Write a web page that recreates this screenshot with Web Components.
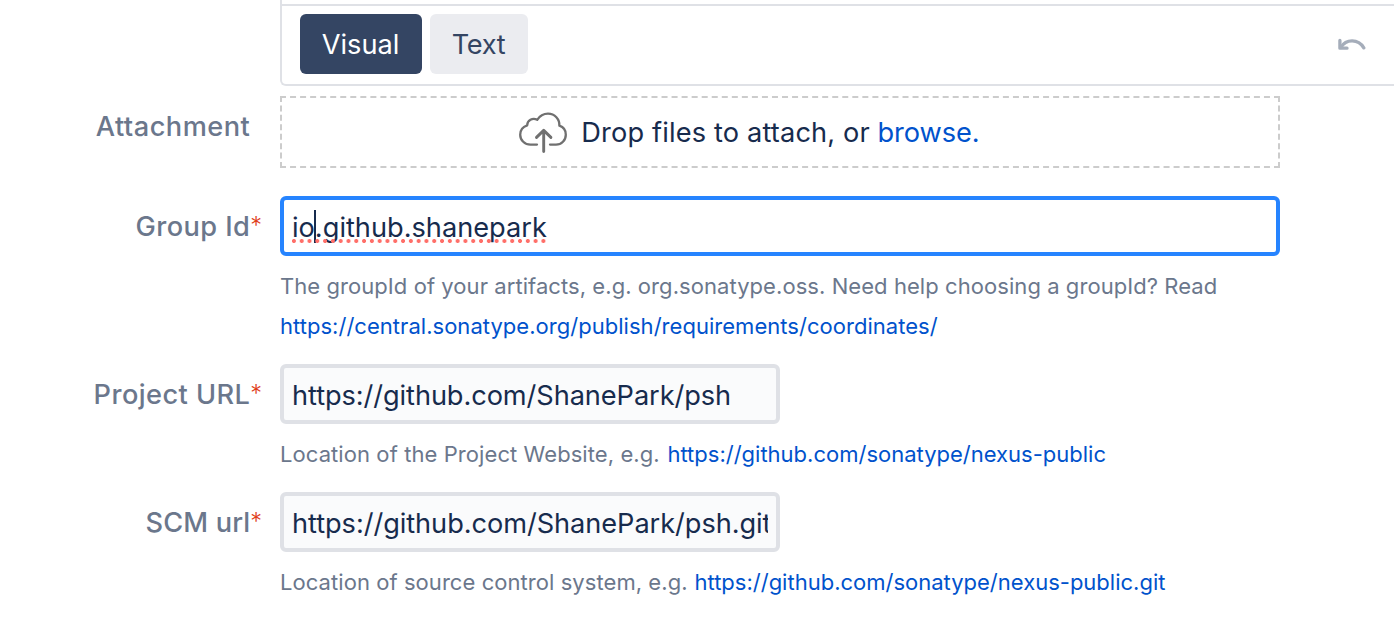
<!DOCTYPE html>
<html lang="en">
<head>
<meta charset="utf-8">
<title>Create issue</title>
<style>
body { margin: 0; background: #fff; color: #172b4d; font: 400 27.2px/40px Inter, "Liberation Sans", sans-serif; font-kerning: normal; width: 1394px; height: 620px; overflow: hidden; }
</style>
</head>
<body>
<issue-form>
  <editor-footer>
    <mode-button active>Visual</mode-button>
    <mode-button style="--track:-.4px">Text</mode-button>
  </editor-footer>
  <form-row label="Attachment" style="--row-gap:28px;--label-height:60px;--label-track:.48px">
    <drop-zone>Drop files to attach, or <text-link slot="action" style="--track:-.08px">browse.</text-link></drop-zone>
  </form-row>
  <form-row label="Group Id" required>
    <text-field focused>io.github.shanepark</text-field>
    <span slot="help" style="letter-spacing:.065px">The groupId of your artifacts, e.g. org.sonatype.oss. Need help choosing a groupId? Read</span>
    <br slot="help">
    <text-link slot="help" style="--track:.03px">https://central.sonatype.org/publish/requirements/coordinates/</text-link>
  </form-row>
  <form-row label="Project URL" required>
    <text-field style="--track:-.08px">https://github.com/ShanePark/psh</text-field>
    <span slot="help" style="letter-spacing:.08px;margin-right:1.5px">Location of the Project Website, e.g.</span>
    <text-link slot="help">https://github.com/sonatype/nexus-public</text-link>
  </form-row>
  <form-row label="SCM url" required style="--label-track:.15px">
    <text-field style="--track:-.06px">https://github.com/ShanePark/psh.git</text-field>
    <span slot="help" style="letter-spacing:.06px;margin-right:.7px">Location of source control system, e.g.</span>
    <text-link slot="help">https://github.com/sonatype/nexus-public.git</text-link>
  </form-row>
</issue-form>
<script>
function define(name, markup, setup) {
  const template = document.createElement('template');
  template.innerHTML = markup;
  customElements.define(name, class extends HTMLElement {
    constructor() {
      super();
      this.attachShadow({ mode: 'open' }).append(template.content.cloneNode(true));
    }
    connectedCallback() { if (setup) setup(this, this.shadowRoot); }
  });
}

define('issue-form', `
<style>
  :host { display: flex; flex-direction: column; }
</style><slot></slot>`);

define('editor-footer', `
<style>
  :host { display: block; margin: 0 0 10px 280px; height: 86px; box-sizing: border-box; padding-top: 4px;
    border: solid #dfe1e6; border-width: 0 0 2px 2px; border-bottom-left-radius: 6px; }
  .bar { display: flex; align-items: center; gap: 8px; height: 80px; box-sizing: border-box;
    border-top: 2px solid #dfe1e6; padding: 0 28px 2px 18px; }
  svg { margin-left: auto; margin-top: 1px; }
</style>
<div class="bar"><slot></slot>
  <svg width="28" height="14" viewBox="0 0 28 14" fill="none" stroke="#a5adba" stroke-width="3.3" stroke-linecap="round" stroke-linejoin="round">
    <path d="M1.9 2.4V10.2H9"/><path d="M2.8 9.4C8 1 20 .4 25.8 9.8"/>
  </svg>
</div>`);

define('mode-button', `
<style>
  :host { display: flex; align-items: center; justify-content: center; box-sizing: border-box; width: 98px; height: 60px;
    padding: 2px 1px 0 0; border-radius: 6px; background: #ebecf0; color: #344563; letter-spacing: var(--track); }
  :host([active]) { width: 122px; background: #344563; color: #fff; }
</style><slot></slot>`);

define('form-row', `
<style>
  :host { display: grid; grid-template-columns: 250.3px 1000px; column-gap: 29.7px; margin-bottom: var(--row-gap, 18px); }
  .label { display: flex; justify-content: flex-end; align-items: center; height: var(--label-height, 60px);
    box-sizing: border-box; padding-top: 2px;
    color: #6b778c; font-weight: 500; letter-spacing: var(--label-track, .43px); white-space: nowrap; }
  .mark { width: 0; font-size: 23.5px; font-weight: 300; color: #e0401a; line-height: 32px; margin-bottom: 2px; }
  .help { margin-top: 10px; font-size: 22px; line-height: 40px; color: #6b778c; white-space: nowrap; }
  .help.empty { display: none; }
</style>
<div class="label"><span class="text"></span></div>
<div><slot></slot><div class="help"><slot name="help"></slot></div></div>`, (host, root) => {
  root.querySelector('.text').textContent = host.getAttribute('label');
  if (host.hasAttribute('required')) {
    const mark = document.createElement('span');
    mark.className = 'mark';
    mark.textContent = '*';
    root.querySelector('.label').append(mark);
  }
  root.querySelector('.help').classList.toggle('empty', !host.querySelector('[slot=help]'));
});

define('text-link', `
<style>
  :host { display: inline; color: #0052cc; letter-spacing: var(--track, 0); cursor: pointer; }
</style><slot></slot>`);

define('drop-zone', `
<style>
  :host { display: flex; align-items: center; box-sizing: border-box; height: 72px;
    border: 2px dashed #ccc; padding: 2px 0 0 237px; white-space: nowrap; }
  svg { margin: 0 14.3px 0 0; }
  .text { letter-spacing: .15px; width: 296.2px; }
</style>
<svg width="48" height="42" viewBox="0 0 48 42" fill="none" stroke="#707070" stroke-width="2.3" stroke-linecap="round" stroke-linejoin="round">
  <path d="M18 32.6H11.5C5.8 32.6 1.2 28.3 1.2 22.7C1.2 18.3 4 14.7 8.2 13.3C8.2 8.4 13.5 5.4 18.2 7.8C20.8 3.8 24.6 1.7 29 1.7C35.8 1.7 40.7 7 40.4 13.7C44.4 15 46.8 18.5 46.8 22.7C46.8 28.3 42.5 32.6 37 32.6H31"/>
  <path stroke-width="2.9" d="M24.7 39.5V18.8M17.5 25.4L24.7 18.4L31.9 25.4"/>
</svg>
<span class="text"><slot></slot></span><slot name="action"></slot>`);

define('text-field', `
<style>
  :host { display: block; box-sizing: border-box; width: 500px; height: 60px; border: 4px solid #dfe1e6; border-radius: 6px;
    background: #fafbfc; padding: 0 8px; letter-spacing: var(--track); }
  :host([focused]) { width: 1000px; border-color: #2684ff; background: #fff; }
  .view { position: relative; height: 52px; line-height: 56px; overflow: hidden; white-space: nowrap; }
  .caret, .dots { display: none; position: absolute; }
  :host([focused]) .caret, :host([focused]) .dots { display: block; }
  .caret { left: 22px; top: 10px; width: 2px; height: 33px; background: #172b4d; }
  .dots { left: -2.1px; top: 39px; width: 257.7px; height: 4px;
    background: radial-gradient(circle at 50% 50%, #ff6f69 1.7px, transparent 2.3px) 0 0 / 7.81px 4px repeat-x; }
</style>
<div class="view"><slot></slot><i class="caret"></i><i class="dots"></i></div>`);
</script>
</body>
</html>
